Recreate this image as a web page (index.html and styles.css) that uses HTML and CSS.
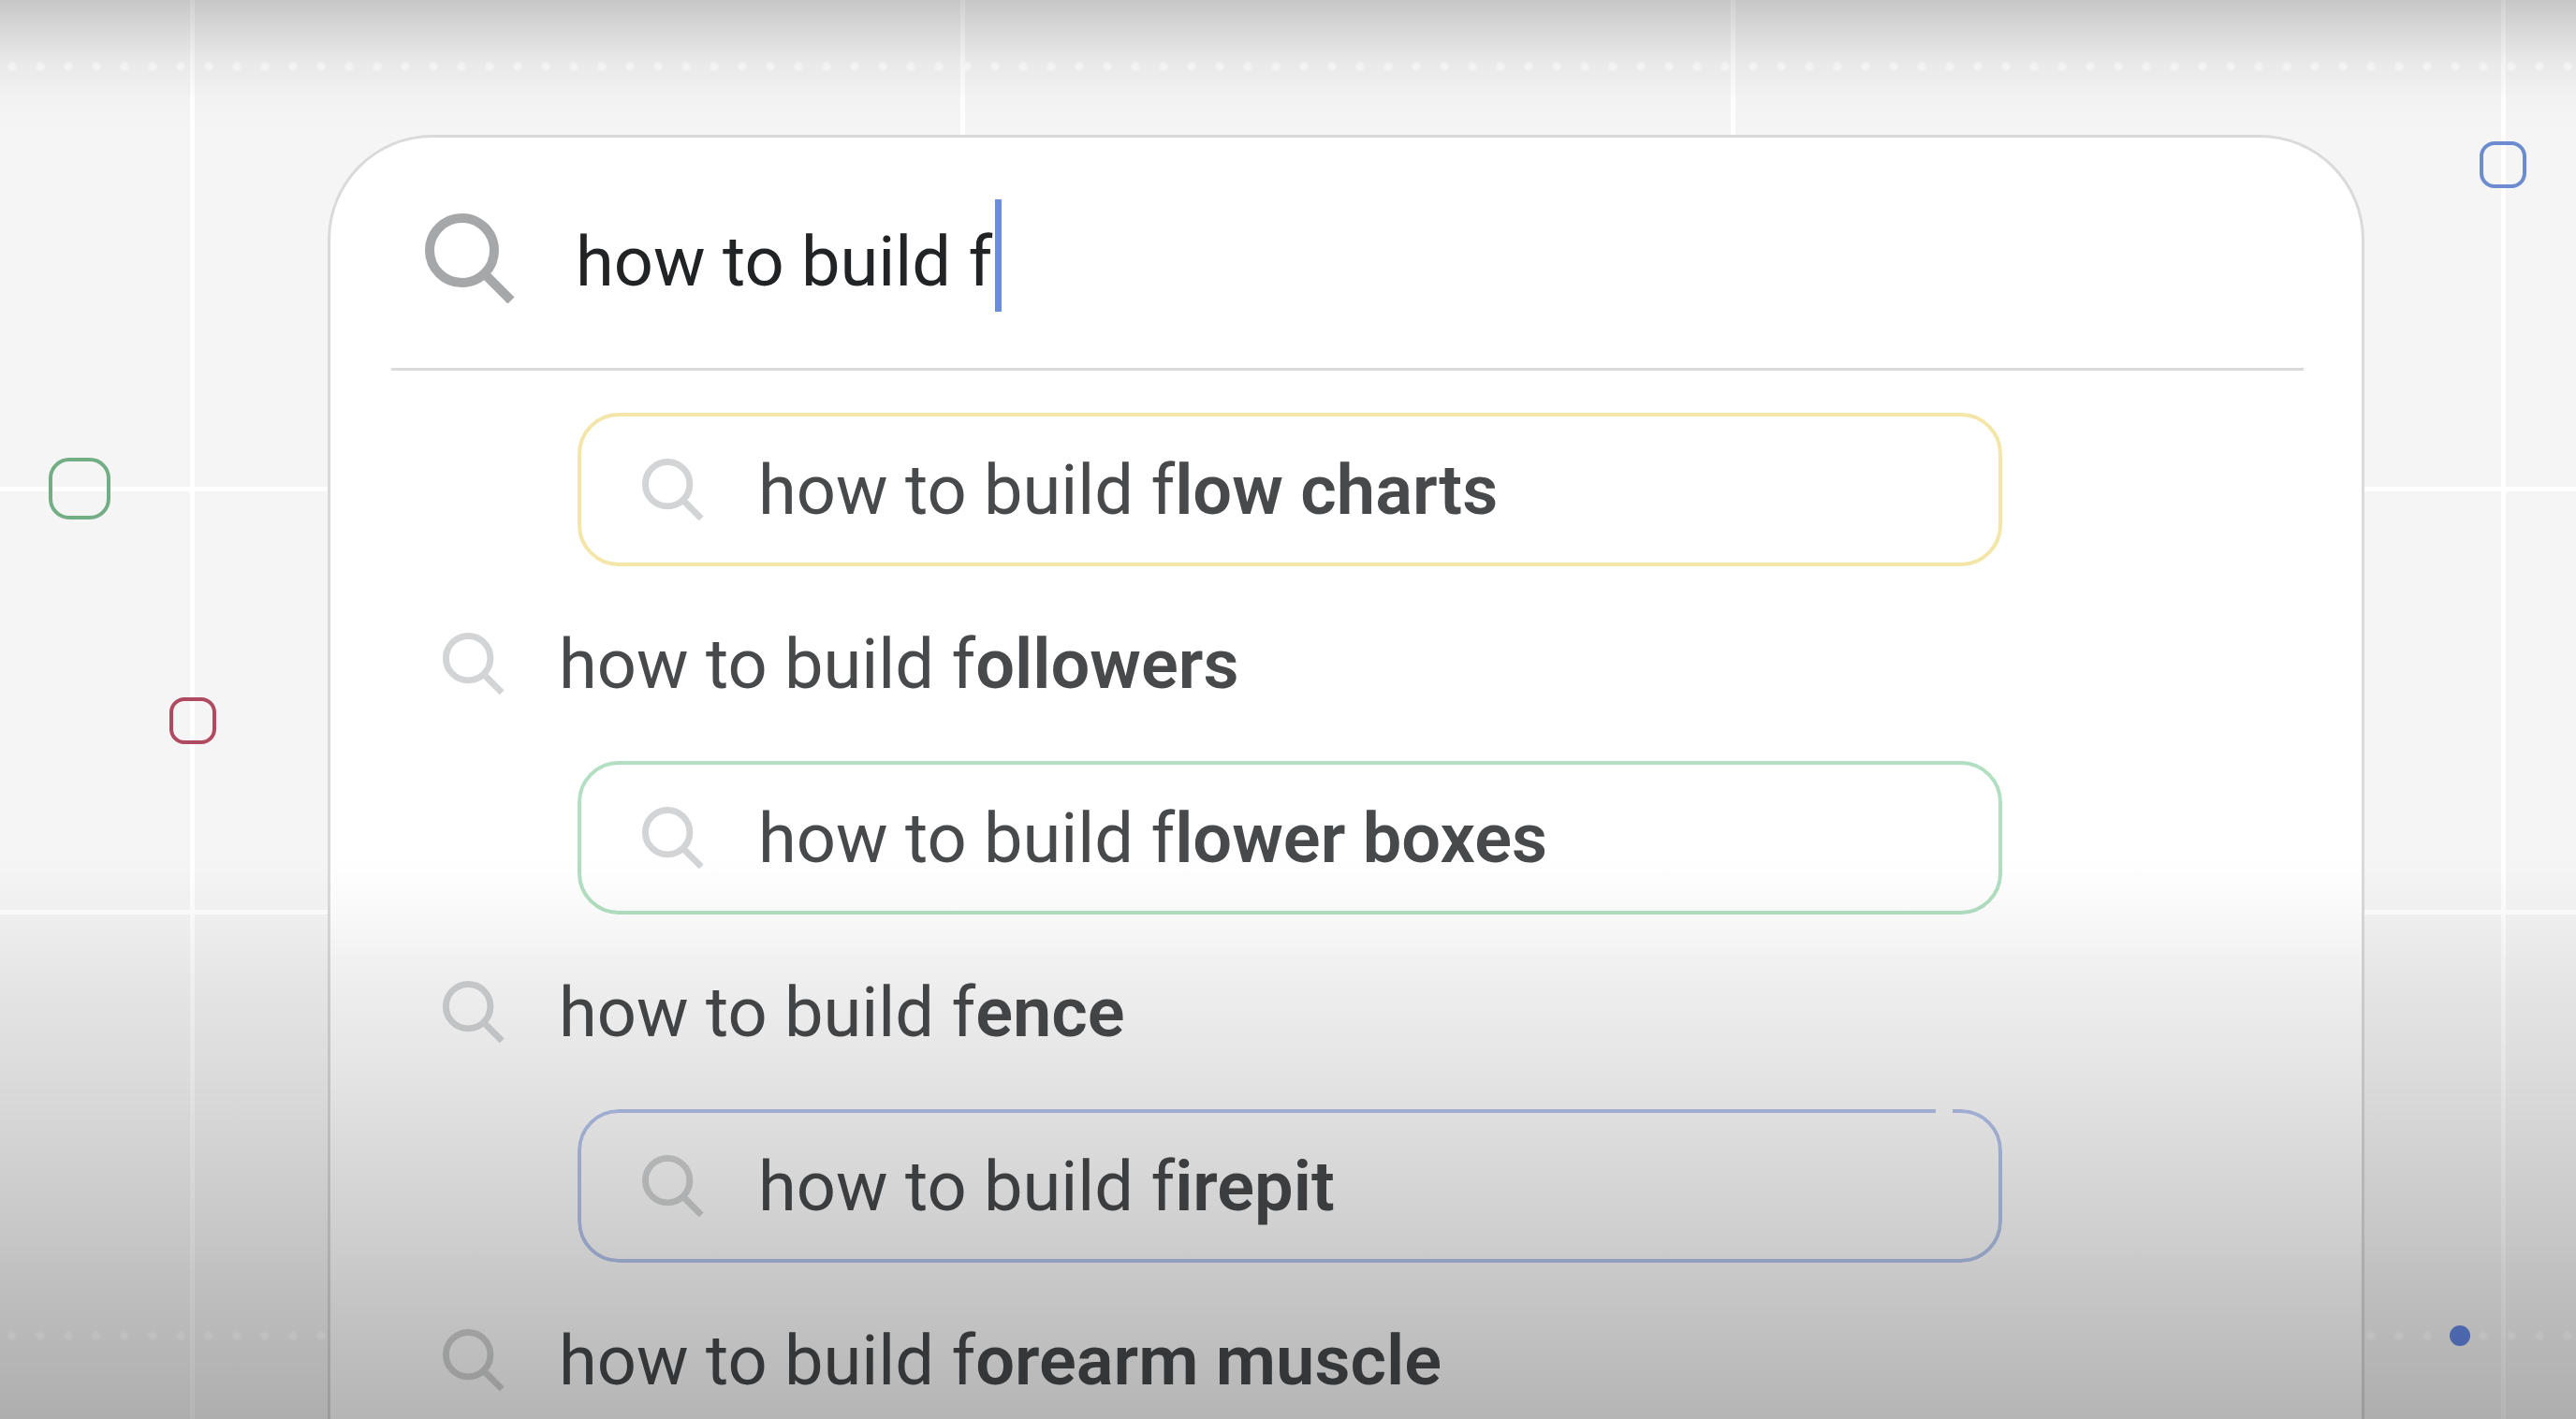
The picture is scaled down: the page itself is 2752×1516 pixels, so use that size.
FILE: index.html
```html
<!DOCTYPE html>
<html lang="en">
  <head>
    <meta charset="UTF-8" />
    <meta name="viewport" content="width=device-width, initial-scale=1.0" />
    <title>how to build f</title>
    <link rel="stylesheet" href="styles.css">
  </head>

  <body>
    <!-- Magnifier shape, shared by all rows -->
    <svg class="defs" aria-hidden="true">
      <defs>
        <g id="magnifier" fill="none" stroke="currentColor" stroke-width="10">
          <circle cx="39.5" cy="39.5" r="34.5" />
          <path d="M63 64 L92 93" />
        </g>
      </defs>
    </svg>

    <div class="scene">
      <!-- Background shapes -->
      <span class="shape shape-green"></span>
      <span class="shape shape-red"></span>
      <span class="shape shape-blue"></span>
      <span class="dot"></span>

      <main class="card">
        <form class="search" role="search">
          <svg class="search-icon" viewBox="0 -6 102 102" aria-hidden="true"><use href="#magnifier" /></svg>
          <div class="field">
            <input class="query" type="text" value="how to build f" aria-label="Search" autocomplete="off" spellcheck="false" />
            <span class="caret"></span>
          </div>
        </form>

        <ul class="suggestions">
          <li>
            <a class="row boxed yellow" href="#">
              <svg class="icon" viewBox="0 0 96 96" aria-hidden="true"><use href="#magnifier" /></svg>
              <span>how to build f<b>low charts</b></span>
            </a>
          </li>
          <li>
            <a class="row" href="#">
              <svg class="icon" viewBox="0 0 96 96" aria-hidden="true"><use href="#magnifier" /></svg>
              <span>how to build f<b>ollowers</b></span>
            </a>
          </li>
          <li>
            <a class="row boxed green" href="#">
              <svg class="icon" viewBox="0 0 96 96" aria-hidden="true"><use href="#magnifier" /></svg>
              <span>how to build f<b>lower boxes</b></span>
            </a>
          </li>
          <li>
            <a class="row" href="#">
              <svg class="icon" viewBox="0 0 96 96" aria-hidden="true"><use href="#magnifier" /></svg>
              <span>how to build f<b>ence</b></span>
            </a>
          </li>
          <li>
            <a class="row boxed blue" href="#">
              <svg class="icon" viewBox="0 0 96 96" aria-hidden="true"><use href="#magnifier" /></svg>
              <span>how to build f<b>irepit</b></span>
            </a>
          </li>
          <li>
            <a class="row" href="#">
              <svg class="icon" viewBox="0 0 96 96" aria-hidden="true"><use href="#magnifier" /></svg>
              <span>how to build f<b>orearm muscle</b></span>
            </a>
          </li>
        </ul>
      </main>
    </div>
  </body>
</html>
```

FILE: styles.css
```css
* {
  box-sizing: border-box;
}

body {
  margin: 0;
  font-family: Roboto, "Liberation Sans", sans-serif;
  font-size: 74px;
  color: #47494b;
}

b {
  font-weight: 600;
}

.defs {
  position: absolute;
  width: 0;
  height: 0;
}

/* grid lines and dotted lines behind the card */
.scene {
  position: relative;
  height: 100vh;
  overflow: hidden;
  display: flow-root;
  background-color: #f5f5f5;
  background-image:
    linear-gradient(to right, #fff 5px, transparent 5px),
    linear-gradient(#fff, #fff),
    linear-gradient(#fff, #fff),
    radial-gradient(circle, #fff 3px, transparent 6px),
    radial-gradient(circle, #fff 3px, transparent 6px);
  background-size: 823px 100%, 100% 5px, 100% 5px, 30px 14px, 30px 14px;
  background-position: 203px 0, 0 520px, 0 972px, -2px 64px, -2px 1420px;
  background-repeat: repeat-x;
}

/* dark fade at the top and the bottom */
.scene::after {
  content: "";
  position: absolute;
  inset: 0;
  pointer-events: none;
  background-image:
    linear-gradient(
      to bottom,
      rgba(0, 0, 0, 0.19) 0,
      rgba(0, 0, 0, 0.1) 40px,
      rgba(0, 0, 0, 0.05) 66px,
      rgba(0, 0, 0, 0.01) 105px,
      transparent 140px
    ),
    linear-gradient(
      to top,
      rgba(0, 0, 0, 0.29) 0,
      rgba(0, 0, 0, 0.235) 116px,
      rgba(0, 0, 0, 0.18) 216px,
      rgba(0, 0, 0, 0.105) 366px,
      rgba(0, 0, 0, 0.065) 466px,
      rgba(0, 0, 0, 0.024) 542px,
      transparent 600px
    );
}

.shape,
.dot {
  position: absolute;
}

.shape {
  width: 50px;
  height: 50px;
  border: 4px solid;
  border-radius: 16px;
}

.shape-green {
  top: 489px;
  left: 52px;
  width: 66px;
  height: 66px;
  border-radius: 22px;
  color: #72ad84;
}

.shape-red {
  top: 745px;
  left: 181px;
  color: #b04a60;
}

.shape-blue {
  top: 151px;
  right: 53px;
  color: #6c8cd0;
}

.dot {
  right: 113px;
  top: 1416px;
  width: 22px;
  height: 22px;
  border-radius: 50%;
  background-color: #6488e4;
}

.card {
  position: relative;
  margin: 144px 226px 0 350px;
  border: 3px solid #dadada;
  border-bottom: none;
  border-radius: 112px 112px 0 0;
  background-color: #fff;
}

.search {
  display: flex;
  align-items: center;
  gap: 59px;
  margin: 0 62px 0 65px;
  padding: 66px 0 60px 36px;
  border-bottom: 3px solid #dadada;
}

.search-icon {
  flex: none;
  width: 102px;
  height: 102px;
  color: #a5a7a9;
}

.field {
  display: flex;
  align-items: flex-end;
}

.query {
  width: 448px;
  height: 108px;
  padding: 0;
  border: none;
  outline: none;
  background: none;
  font: inherit;
  color: #222324;
}

.caret {
  width: 7px;
  height: 120px;
  background-color: #6a8edb;
}

.suggestions {
  display: flex;
  flex-direction: column;
  gap: 22px;
  margin: 0;
  padding: 45px 0;
  list-style: none;
}

.row {
  position: relative;
  display: flex;
  align-items: center;
  gap: 58px;
  height: 164px;
  margin: 0 120px;
  color: inherit;
  text-decoration: none;
  white-space: nowrap;
}

.boxed {
  margin: 0 384px 0 264px;
  padding-left: 69px;
}

/* coloured outline */
.boxed::before {
  content: "";
  position: absolute;
  inset: 0;
  border: 4px solid;
  border-radius: 44px;
}

.yellow::before {
  color: #f4e5a9;
}

.green::before {
  color: #b2dfc1;
}

.blue::before {
  color: #b6c7ee;
  mask-image:
    linear-gradient(
      to left,
      #000 53px,
      transparent 53px,
      transparent 71px,
      #000 71px
    ),
    linear-gradient(#000, #000);
  mask-size: 100% 10px, 100% 100%;
  mask-position: 0 0, 0 10px;
  mask-repeat: no-repeat;
}

.icon {
  flex: none;
  width: 66px;
  height: 66px;
  color: #d3d4d5;
}
```
